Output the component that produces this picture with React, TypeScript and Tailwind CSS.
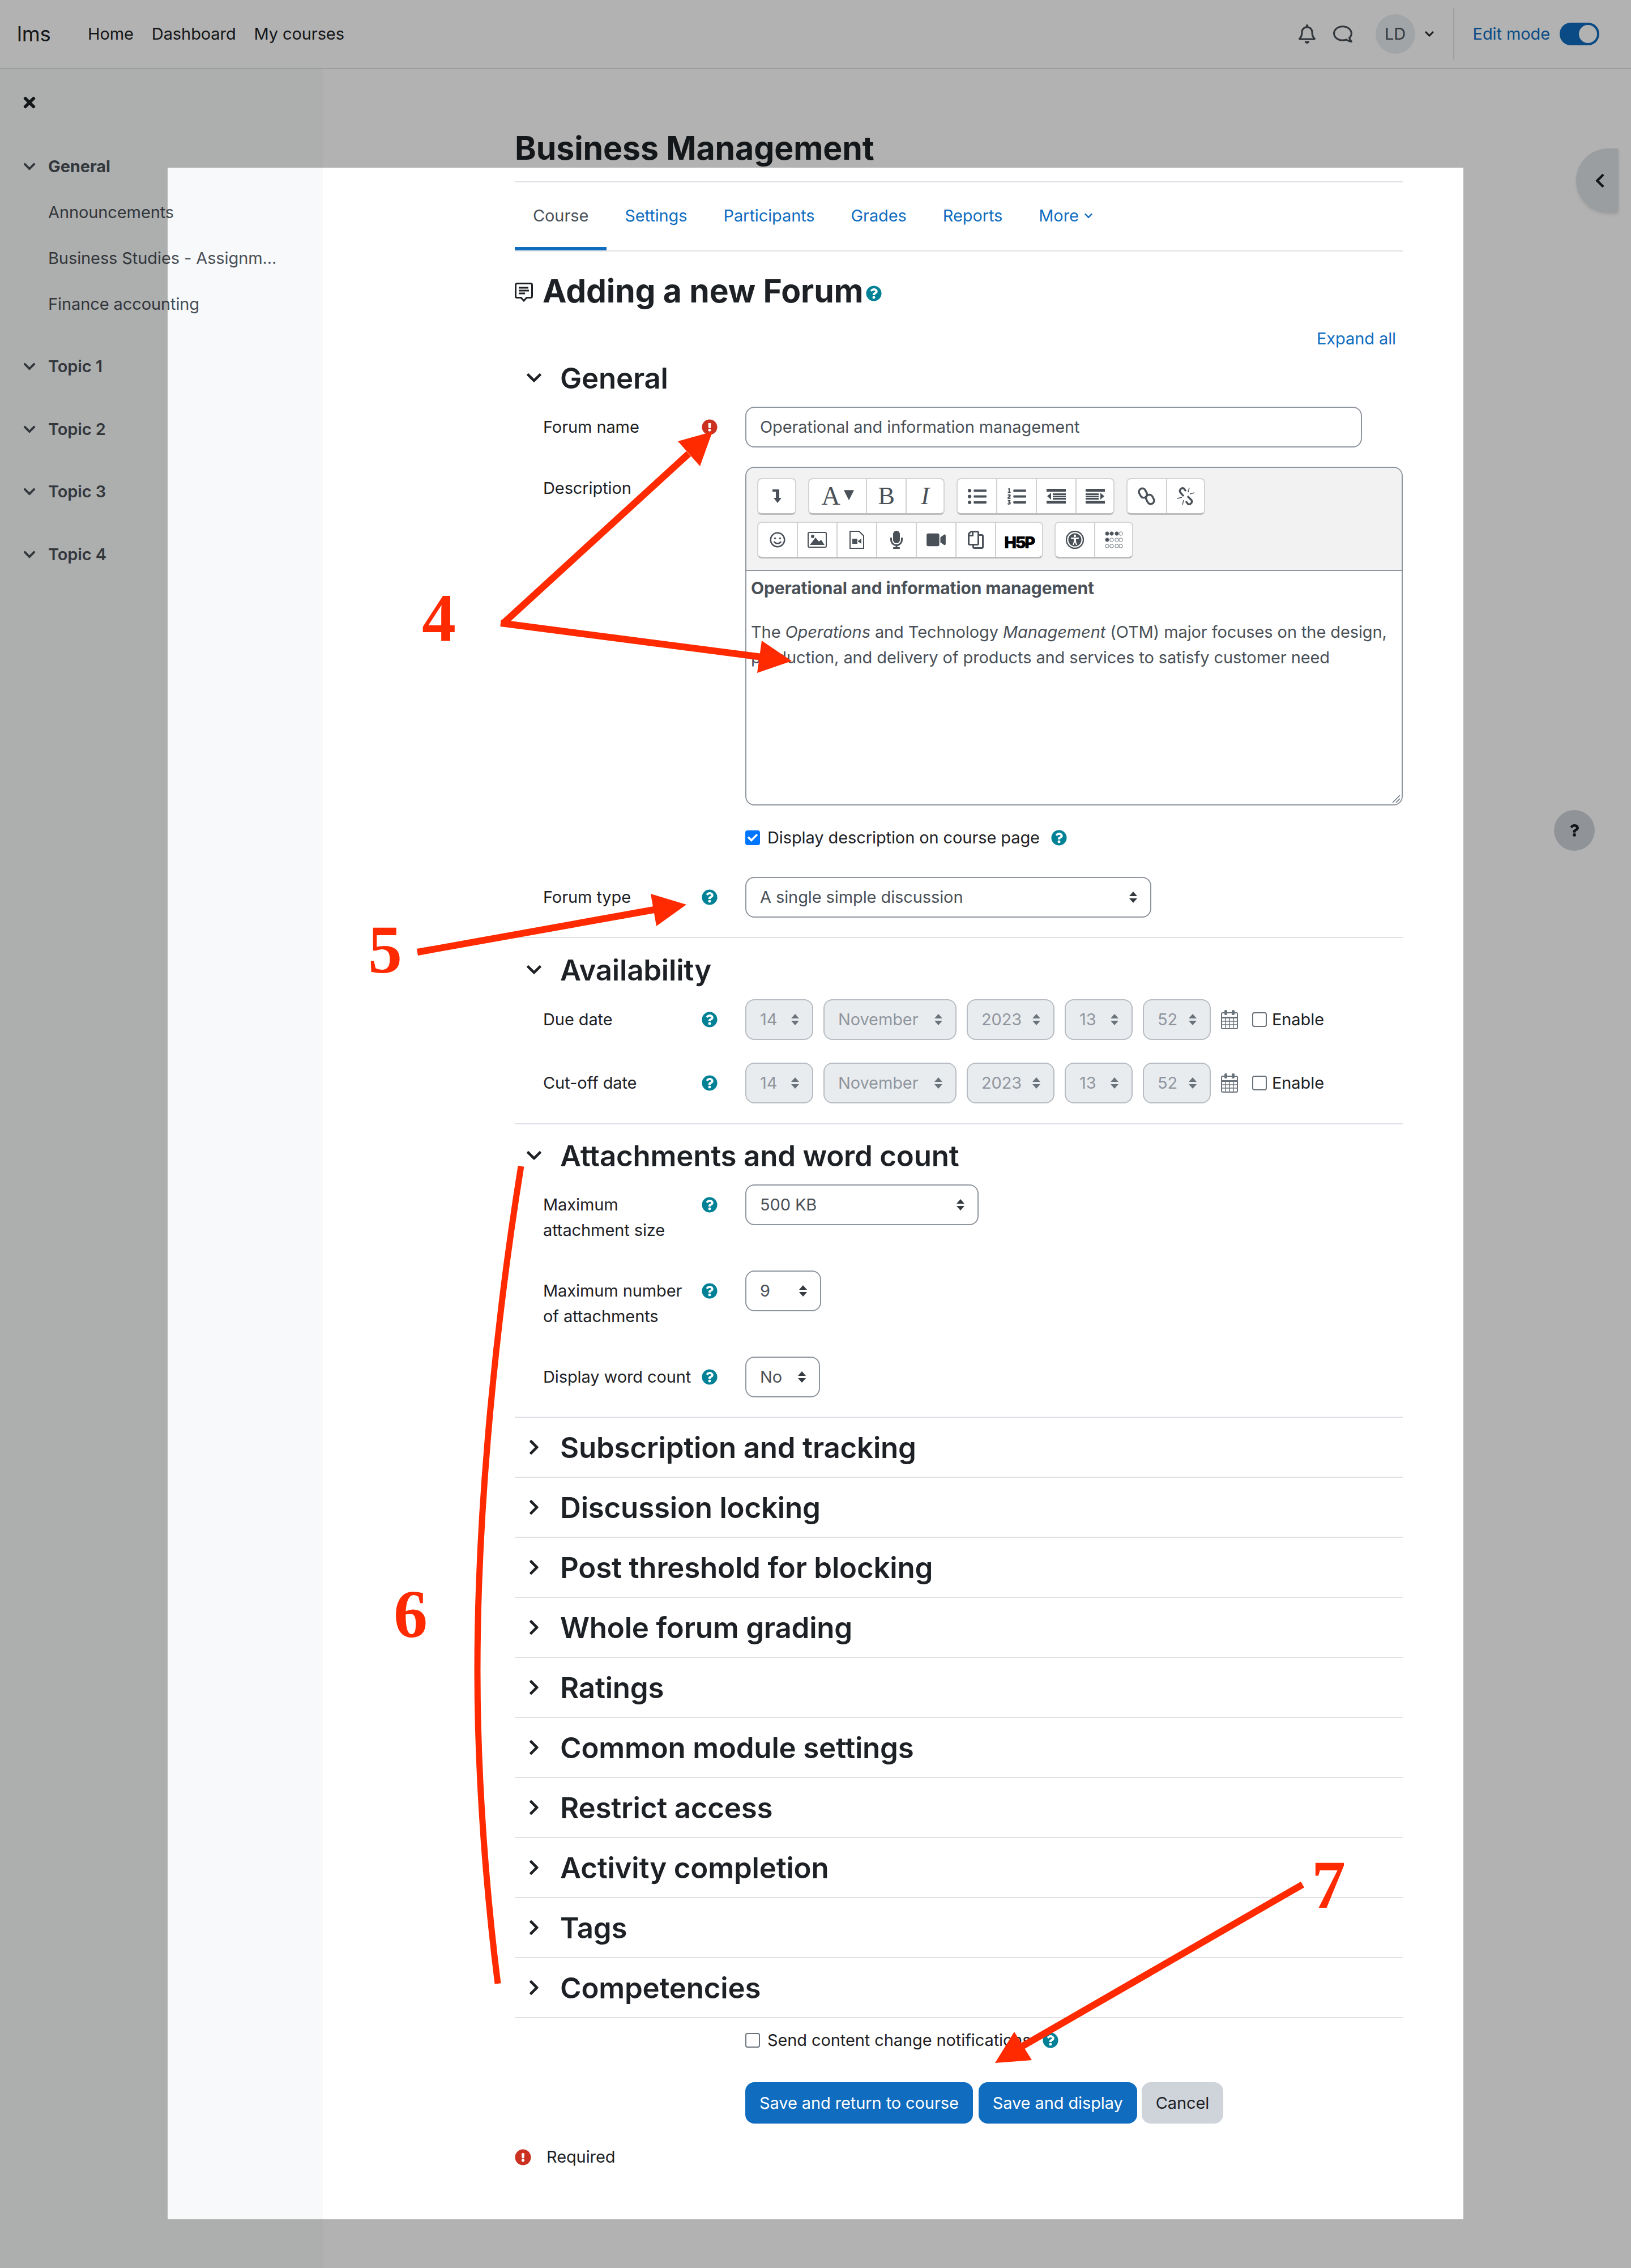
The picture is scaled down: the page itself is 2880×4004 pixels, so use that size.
import {
  FaChevronDown,
  FaChevronLeft,
  FaChevronRight,
  FaExclamationCircle,
  FaListOl,
  FaListUl,
  FaMicrophone,
  FaQuestion,
  FaQuestionCircle,
  FaRegBell,
  FaRegComment,
  FaRegCopy,
  FaRegSmile,
  FaTimes,
  FaVideo,
  FaCheck,
} from "react-icons/fa";

const collapsed = [
  "Subscription and tracking",
  "Discussion locking",
  "Post threshold for blocking",
  "Whole forum grading",
  "Ratings",
  "Common module settings",
  "Restrict access",
  "Activity completion",
  "Tags",
  "Competencies",
];

function Help() {
  return <FaQuestionCircle className="w-[28px] h-[28px] shrink-0 text-[#008196]" />;
}

function SortArrows({ muted }: { muted?: boolean }) {
  return (
    <svg viewBox="0 0 16 22" className={`w-[16px] h-[22px] shrink-0 ${muted ? "text-[#6a737b]" : "text-[#343a40]"}`}>
      <path d="M8 1 15 9H1z M8 21 1 13h14z" fill="currentColor" />
    </svg>
  );
}

function Select({ text, width, disabled }: { text: string; width: string; disabled?: boolean }) {
  return (
    <div
      className={`${width} h-[72px] shrink-0 flex items-center justify-between rounded-2xl border-2 pl-[24px] pr-[22px] ${
        disabled ? "bg-[#e9ecef] border-[#b8bdc3] text-[#8f959e]" : "bg-white border-[#8f959e] text-[#495057]"
      }`}
    >
      <span>{text}</span>
      <SortArrows muted={disabled} />
    </div>
  );
}

function SectionHead({ title, open, className }: { title: string; open?: boolean; className?: string }) {
  return (
    <div className={`flex items-center h-[50px] text-[#1d2125] ${className ?? ""}`}>
      <div className="w-[80px] pl-[19px] flex">
        {open ? <FaChevronDown className="w-[30px] h-[30px]" /> : <FaChevronRight className="w-[30px] h-[30px]" />}
      </div>
      <h3 className="text-[51px] font-semibold leading-none tracking-[-0.2px]">{title}</h3>
    </div>
  );
}

function Row({ label, className, children }: { label: React.ReactNode; className?: string; children: React.ReactNode }) {
  return (
    <div className={`flex pl-[50px] ${className ?? ""}`}>
      <div className="w-[280px] shrink-0 pt-[13px] leading-[45px] text-[#1d2125]">{label}</div>
      <div className="w-[77px] shrink-0 pt-[22px]">
        <Help />
      </div>
      {children}
    </div>
  );
}

function DateRow({ className }: { className?: string }) {
  return (
    <div className={`flex items-center gap-[18px] ${className ?? ""}`}>
      <Select text="14" width="w-[120px]" disabled />
      <Select text="November" width="w-[235px]" disabled />
      <Select text="2023" width="w-[155px]" disabled />
      <Select text="13" width="w-[120px]" disabled />
      <Select text="52" width="w-[120px]" disabled />
      <div className="flex items-center">
        <svg viewBox="0 0 30 34" className="w-[30px] h-[34px] text-[#6a737b]">
          <rect x="1" y="5" width="28" height="28" rx="2" fill="none" stroke="currentColor" strokeWidth="2" />
          <path d="M1 12h28v3H1z" fill="currentColor" />
          <path d="M1 20h28M1 26h28M8 13v20M15 13v20M22 13v20" stroke="currentColor" strokeWidth="1.4" />
          <rect x="6" y="0" width="5" height="9" rx="2" fill="currentColor" />
          <rect x="19" y="0" width="5" height="9" rx="2" fill="currentColor" />
        </svg>
        <span className="ml-[25px] w-[26px] h-[26px] rounded-[4px] border-2 border-[#6a737b] bg-white" />
        <span className="ml-[9px] text-[#1d2125]">Enable</span>
      </div>
    </div>
  );
}

function ToolBtn({ children, width = "w-[70px]", last }: { children: React.ReactNode; width?: string; last?: boolean }) {
  return (
    <div className={`${width} h-full flex items-center justify-center text-[#495057] ${last ? "" : "border-r-2 border-[#d0d0d0]"}`}>
      {children}
    </div>
  );
}

function ToolGroup({ children }: { children: React.ReactNode }) {
  return <div className="flex h-[65px] bg-white rounded-lg border-2 border-[#d4d4d4] border-b-[3px] border-b-[#bdbdbd]">{children}</div>;
}

function IndentIcon({ flip }: { flip?: boolean }) {
  return (
    <svg viewBox="0 0 34 26" className={`w-[34px] h-[26px] ${flip ? "-scale-x-100" : ""}`}>
      <path d="M0 0h34v5H0zM0 21h34v5H0zM11 8h23v3H11zM11 12h23v3H11zM11 16h23v3H11zM8 7v12L1 13z" fill="currentColor" />
    </svg>
  );
}

function Toolbar() {
  return (
    <div className="h-[182px] bg-[#f2f2f2] border-b-2 border-[#8f959e] pt-[18px] pl-[19px] rounded-t-2xl">
      <div className="flex gap-[21px]">
        <ToolGroup>
          <ToolBtn width="w-[65px]" last>
            <svg viewBox="0 0 18 26" className="w-[18px] h-[26px]">
              <path d="M1 1h12v15h4l-7 9-7-9h4V5H1z" fill="currentColor" />
            </svg>
          </ToolBtn>
        </ToolGroup>
        <ToolGroup>
          <ToolBtn width="w-[102px]">
            <span className="font-['Liberation_Serif',serif] text-[46px] leading-none mr-[6px]">A</span>
            <svg viewBox="0 0 20 24" className="w-[18px] h-[24px]">
              <path d="M0 0h20L10 20z" fill="currentColor" />
            </svg>
          </ToolBtn>
          <ToolBtn>
            <span className="font-['Liberation_Serif',serif] text-[44px] leading-none">B</span>
          </ToolBtn>
          <ToolBtn width="w-[65px]" last>
            <span className="font-['Liberation_Serif',serif] italic text-[44px] leading-none">I</span>
          </ToolBtn>
        </ToolGroup>
        <ToolGroup>
          <ToolBtn><FaListUl className="w-[33px] h-[33px]" /></ToolBtn>
          <ToolBtn><FaListOl className="w-[33px] h-[33px]" /></ToolBtn>
          <ToolBtn><IndentIcon /></ToolBtn>
          <ToolBtn width="w-[65px]" last><IndentIcon flip /></ToolBtn>
        </ToolGroup>
        <ToolGroup>
          <ToolBtn>
            <svg viewBox="0 0 32 32" className="w-[32px] h-[32px]" fill="none" stroke="currentColor" strokeWidth="3.4">
              <rect x="3" y="2" width="12" height="17" rx="6" transform="rotate(-28 9 10)" />
              <rect x="16" y="13" width="12" height="17" rx="6" transform="rotate(-28 22 22)" />
            </svg>
          </ToolBtn>
          <ToolBtn width="w-[65px]" last>
            <svg viewBox="0 0 34 32" className="w-[34px] h-[32px]" fill="none" stroke="currentColor">
              <path d="M13 16 7 9a5 5 0 0 1 6-7l4 5" strokeWidth="3.4" />
              <path d="M20 16l7 7a5 5 0 0 1-6 7l-4-5" strokeWidth="3.4" />
              <path d="M23 1l-2 8M32 10l-8 2M2 20l8-2M11 31l2-8" strokeWidth="1.4" />
            </svg>
          </ToolBtn>
        </ToolGroup>
      </div>
      <div className="flex gap-[20px] mt-[12px]">
        <ToolGroup>
          <ToolBtn><FaRegSmile className="w-[28px] h-[28px]" /></ToolBtn>
          <ToolBtn>
            <svg viewBox="0 0 34 28" className="w-[34px] h-[28px]">
              <rect x="1" y="1" width="32" height="26" rx="2" fill="none" stroke="currentColor" strokeWidth="2" />
              <circle cx="9" cy="8" r="3" fill="currentColor" />
              <path d="M4 23l10-13 6 7 4-3 6 9z" fill="currentColor" />
            </svg>
          </ToolBtn>
          <ToolBtn>
            <svg viewBox="0 0 26 32" className="w-[26px] h-[32px]">
              <path d="M1 1h16l8 8v22H1z" fill="none" stroke="currentColor" strokeWidth="2" />
              <path d="M5 14h9v9H5zM15 18l6-4v9l-6-4z" fill="currentColor" />
            </svg>
          </ToolBtn>
          <ToolBtn><FaMicrophone className="w-[26px] h-[32px]" /></ToolBtn>
          <ToolBtn><FaVideo className="w-[34px] h-[30px]" /></ToolBtn>
          <ToolBtn><FaRegCopy className="w-[30px] h-[32px] -scale-x-100" /></ToolBtn>
          <ToolBtn width="w-[81px]" last>
            <span className="text-black font-black text-[29px] leading-none tracking-[-2.5px] mt-[8px]">H5P</span>
          </ToolBtn>
        </ToolGroup>
        <ToolGroup>
          <ToolBtn>
            <svg viewBox="0 0 32 32" className="w-[32px] h-[32px]">
              <circle cx="16" cy="16" r="15" fill="none" stroke="currentColor" strokeWidth="2.4" />
              <circle cx="16" cy="16" r="11.5" fill="currentColor" />
              <circle cx="16" cy="9" r="2.2" fill="white" />
              <path d="M9 12h14v2l-5 1v4l2 6h-2l-2-5-2 5h-2l2-6v-4l-5-1z" fill="white" />
            </svg>
          </ToolBtn>
          <ToolBtn width="w-[65px]" last>
            <svg viewBox="0 0 32 32" className="w-[32px] h-[32px]">
              {[0, 1, 2].map((r) =>
                [4, 12, 21, 28].map((x, c) => {
                  const filled = (r === 0 && c !== 3) || (r === 1 && c === 0);
                  return (
                    <circle key={`${r}-${c}`} cx={x} cy={5 + r * 11} r="3.2" fill={filled ? "#495057" : "white"} stroke="#6a737b" strokeWidth="1" />
                  );
                })
              )}
            </svg>
          </ToolBtn>
        </ToolGroup>
      </div>
    </div>
  );
}

function Header() {
  return (
    <header className="h-[122px] border-b-2 border-[#dee2e6] flex items-center bg-white text-[#1d2125]">
      <span className="ml-[30px] text-[36.5px] w-[125px]">lms</span>
      <nav className="flex gap-[32px]">
        <span>Home</span>
        <span>Dashboard</span>
        <span>My courses</span>
      </nav>
      <div className="ml-auto flex items-center h-full">
        <FaRegBell className="w-[32px] h-[34px] text-[#495057]" />
        <FaRegComment className="w-[34px] h-[34px] ml-[30px] text-[#495057] -scale-x-100" />
        <div className="ml-[41px] w-[70px] h-[70px] rounded-full bg-[#e9ecef] flex items-center justify-center text-[#495057]">LD</div>
        <FaChevronDown className="ml-[16px] w-[18px] h-[18px]" />
        <div className="ml-[33px] h-[90px] border-l-2 border-[#dee2e6]" />
        <span className="ml-[33px] text-[#0f6cbf]">Edit mode</span>
        <div className="ml-[17px] mr-[56px] w-[70px] h-[40px] rounded-full bg-[#0f6cbf] flex justify-end items-center pr-[4px]">
          <span className="w-[32px] h-[32px] rounded-full bg-white" />
        </div>
      </div>
    </header>
  );
}

function Drawer() {
  const topics = ["Topic 1", "Topic 2", "Topic 3", "Topic 4"];
  return (
    <aside className="w-[570px] shrink-0 h-[3882px] bg-[#f8f9fa] text-[#495057]">
      <FaTimes className="ml-[37px] mt-[44px] w-[30px] h-[30px] text-[#1d2125]" />
      <div className="mt-[76px] flex items-center h-[44px]">
        <FaChevronDown className="ml-[40px] mr-[21px] w-[24px] h-[24px]" />
        <span className="font-bold">General</span>
      </div>
      <div className="pl-[85px]">
        <div className="mt-[37px] h-[44px] leading-[44px]">Announcements</div>
        <div className="mt-[37px] h-[44px] leading-[44px]">Business Studies - Assignm...</div>
        <div className="mt-[37px] h-[44px] leading-[44px]">Finance accounting</div>
      </div>
      <div className="mt-[66px] flex flex-col gap-[66.5px]">
        {topics.map((t) => (
          <div key={t} className="flex items-center h-[44px]">
            <FaChevronDown className="ml-[40px] mr-[21px] w-[24px] h-[24px]" />
            <span className="font-semibold">{t}</span>
          </div>
        ))}
      </div>
    </aside>
  );
}

function Tabs() {
  const tabs = ["Settings", "Participants", "Grades", "Reports"];
  return (
    <div className="flex h-[122px] border-b-2 border-[#dee2e6]">
      <div className="h-[120px] pt-[4px] px-[32px] flex items-center border-b-[6px] border-[#0f6cbf] text-[#495057]">Course</div>
      {tabs.map((t) => (
        <div key={t} className="h-[120px] pt-[4px] px-[32px] flex items-center border-b-[6px] border-transparent text-[#0f6cbf]">
          {t}
        </div>
      ))}
      <div className="h-[120px] pt-[4px] pl-[32px] flex items-center border-b-[6px] border-transparent text-[#0f6cbf]">
        More
        <FaChevronDown className="ml-[9px] w-[16px] h-[16px]" />
      </div>
    </div>
  );
}

function Form() {
  return (
    <main className="w-[1568px] ml-[339px] text-[#1d2125]">
      <h1 className="mt-[100px] mb-[18px] h-[80px] text-[57.2px] leading-[80px] font-bold">Business Management</h1>
      <div className="border-t-2 border-[#dee2e6]" />
      <Tabs />

      <div className="mt-[34px] h-[70px] flex items-center">
        <svg viewBox="0 0 32 34" className="w-[32px] h-[34px] mt-[6px] text-[#1d2125]">
          <path d="M4 1.5h24a2.5 2.5 0 0 1 2.5 2.5v20a2.5 2.5 0 0 1-2.5 2.5h-7L16 32l-5-5.5H4A2.5 2.5 0 0 1 1.5 24V4A2.5 2.5 0 0 1 4 1.5z" fill="none" stroke="currentColor" strokeWidth="3" />
          <path d="M7 9h17M7 14h18M7 19h11" stroke="currentColor" strokeWidth="3" />
        </svg>
        <h2 className="ml-[17px] text-[57px] font-bold leading-none">Adding a new Forum</h2>
        <span className="ml-[5px] mt-[10px]"><Help /></span>
      </div>

      <div className="mt-[28px] h-[44px] leading-[44px] pr-[12px] text-right text-[#0f6cbf]">Expand all</div>

      <SectionHead title="General" open className="mt-[22px]" />

      <div className="mt-[26px] flex pl-[50px]">
        <div className="w-[280px] shrink-0 pt-[13px] leading-[45px]">Forum name</div>
        <div className="w-[77px] shrink-0 pt-[22px]">
          <FaExclamationCircle className="w-[28px] h-[28px] text-[#ca3120]" />
        </div>
        <div className="w-[1089px] h-[72px] rounded-2xl border-2 border-[#8f959e] flex items-center pl-[24px] text-[#495057]">
          Operational and information management
        </div>
      </div>

      <div className="mt-[34px] flex pl-[50px]">
        <div className="w-[357px] shrink-0 pt-[15px] leading-[45px]">Description</div>
        <div className="relative w-[1162px] h-[598px] rounded-2xl border-2 border-[#8f959e] overflow-hidden text-[#495057]">
          <Toolbar />
          <div className="px-[8px] pt-[8px] leading-[45px]">
            <p className="font-bold text-[30px]">Operational and information management</p>
            <p className="mt-[32px]">
              The <em>Operations</em> and Technology <em>Management</em> (OTM) major focuses on the design, production, and delivery of products and services to satisfy customer need
            </p>
          </div>
          <svg viewBox="0 0 16 16" className="absolute right-[2px] bottom-[2px] w-[16px] h-[16px] text-[#6a737b]">
            <path d="M15 2 2 15M15 8l-7 7" stroke="currentColor" strokeWidth="1.5" />
          </svg>
        </div>
      </div>

      <div className="mt-[42px] h-[30px] ml-[407px] flex items-center">
        <span className="w-[26px] h-[26px] rounded-[4px] bg-[#0075ff] flex items-center justify-center">
          <FaCheck className="w-[18px] h-[18px] text-white" />
        </span>
        <span className="ml-[13px]">Display description on course page</span>
        <span className="ml-[20px]"><Help /></span>
      </div>

      <Row label="Forum type" className="mt-[54px]">
        <Select text="A single simple discussion" width="w-[717px]" />
      </Row>

      <div className="mt-[34px] border-t-2 border-[#dee2e6]" />
      <SectionHead title="Availability" open className="mt-[31px]" />

      <Row label="Due date" className="mt-[27px]">
        <DateRow />
      </Row>
      <Row label="Cut-off date" className="mt-[40px]">
        <DateRow />
      </Row>

      <div className="mt-[35px] border-t-2 border-[#dee2e6]" />
      <SectionHead title="Attachments and word count" open className="mt-[30px]" />

      <Row label={<>Maximum<br />attachment size</>} className="mt-[26px] h-[72px]">
        <Select text="500 KB" width="w-[412px]" />
      </Row>
      <Row label={<>Maximum number<br />of attachments</>} className="mt-[80px] h-[72px]">
        <Select text="9" width="w-[134px]" />
      </Row>
      <Row label="Display word count" className="mt-[80px] h-[72px]">
        <Select text="No" width="w-[132px]" />
      </Row>

      <div className="mt-[34px] border-t-2 border-[#dee2e6]" />
      {collapsed.map((title) => (
        <div key={title} className="h-[106px] border-b-2 border-[#dee2e6] flex items-center">
          <SectionHead title={title} />
        </div>
      ))}

      <div className="mt-[24px] h-[30px] ml-[407px] flex items-center">
        <span className="w-[26px] h-[26px] rounded-[4px] border-2 border-[#6a737b] bg-white" />
        <span className="ml-[13px]">Send content change notifications</span>
        <span className="ml-[20px]"><Help /></span>
      </div>

      <div className="mt-[59px] ml-[407px] flex h-[73px]">
        <div className="px-[25px] rounded-2xl bg-[#0f6cbf] text-white flex items-center">Save and return to course</div>
        <div className="ml-[10px] px-[25px] rounded-2xl bg-[#0f6cbf] text-white flex items-center">Save and display</div>
        <div className="ml-[8px] px-[25px] rounded-2xl bg-[#ced4da] flex items-center">Cancel</div>
      </div>

      <div className="mt-[44px] h-[30px] flex items-center">
        <FaExclamationCircle className="w-[29px] h-[29px] text-[#ca3120]" />
        <span className="ml-[27px]">Required</span>
      </div>
    </main>
  );
}

function Annotations() {
  const red = "#ff2a00";
  return (
    <>
      <svg viewBox="0 0 2880 4004" className="absolute inset-0 w-[2880px] h-[4004px] pointer-events-none">
        {/* 4 */}
        <path d="M888 1101 1216 801" stroke={red} strokeWidth="12" />
        <polygon points="1258,762 1197,779 1236,823" fill={red} />
        <path d="M884 1100 1345 1160" stroke={red} strokeWidth="12" />
        <polygon points="1398,1167 1345,1131 1337,1188" fill={red} />
        {/* 5 */}
        <path d="M737 1681 1155 1606" stroke={red} strokeWidth="12" />
        <polygon points="1212,1597 1149,1578 1159,1635" fill={red} />
        {/* 6 */}
        <path d="M920 2059C878 2320 843 2650 843 2950C843 3150 860 3350 879 3502" fill="none" stroke={red} strokeWidth="11" />
        {/* 7 */}
        <path d="M2300 3327 1806 3612" stroke={red} strokeWidth="12" />
        <polygon points="1757,3642 1791,3587 1822,3637" fill={red} />
      </svg>
      <span className="absolute left-[745px] top-[1032px] font-['Liberation_Serif',serif] font-bold text-[120px] leading-none text-[#ff2a00]">4</span>
      <span className="absolute left-[650px] top-[1617px] font-['Liberation_Serif',serif] font-bold text-[120px] leading-none text-[#ff2a00]">5</span>
      <span className="absolute left-[695px] top-[2790px] font-['Liberation_Serif',serif] font-bold text-[120px] leading-none text-[#ff2a00]">6</span>
      <span className="absolute left-[2316px] top-[3268px] font-['Liberation_Serif',serif] font-bold text-[120px] leading-none text-[#ff2a00]">7</span>
    </>
  );
}

export default function App() {
  return (
    <div className="relative w-[2880px] h-[4004px] overflow-hidden bg-white font-['Inter',sans-serif] text-[29px] tracking-[-0.1px]">
      <Header />
      <div className="flex">
        <Drawer />
        <Form />
      </div>

      {/* right side floating buttons */}
      <div className="absolute left-[2783px] top-[262px] w-[75px] h-[113px] rounded-l-full bg-[#dee2e6] shadow-md flex items-center justify-center pl-[8px]">
        <FaChevronLeft className="w-[28px] h-[28px] text-[#1d2125]" />
      </div>
      <div className="absolute left-[2744px] top-[1430px] w-[72px] h-[72px] rounded-full bg-[#ced4da] flex items-center justify-center">
        <FaQuestion className="w-[22px] h-[22px] text-[#1d2125]" />
      </div>

      {/* tour spotlight */}
      <div className="absolute left-[296px] top-[296px] w-[2288px] h-[3622px] shadow-[0_0_0_4000px_rgba(0,0,0,0.3)]" />
      <Annotations />
    </div>
  );
}
